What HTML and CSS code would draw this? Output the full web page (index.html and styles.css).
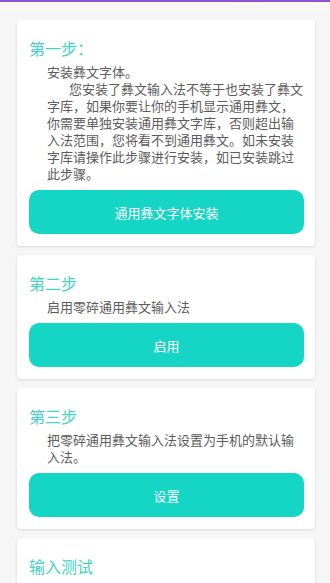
FILE: index.html
```html
<!DOCTYPE html>
<html lang="zh-CN">
<head>
    <meta charset="UTF-8">
    <meta name="viewport" content="width=device-width, initial-scale=1.0">
    <title>零碎通用彝文输入法</title>
    <link rel="stylesheet" href="styles.css">
</head>
<body>
    <div class="top-bar"></div>
    <div class="page">
        <div class="card">
            <div class="step-title">第一步：</div>
            <div class="step-text">
                <p>安装彝文字体。</p>
                <p class="indent">您安装了彝文输入法不等于也安装了彝文字库，如果你要让你的手机显示通用彝文，你需要单独安装通用彝文字库，否则超出输入法范围，您将看不到通用彝文。如未安装字库请操作此步骤进行安装，如已安装跳过此步骤。</p>
            </div>
            <button class="step-btn">通用彝文字体安装</button>
        </div>

        <div class="card">
            <div class="step-title">第二步</div>
            <div class="step-text">
                <p>启用零碎通用彝文输入法</p>
            </div>
            <button class="step-btn">启用</button>
        </div>

        <div class="card">
            <div class="step-title">第三步</div>
            <div class="step-text">
                <p>把零碎通用彝文输入法设置为手机的默认输入法。</p>
            </div>
            <button class="step-btn">设置</button>
        </div>

        <div class="card">
            <div class="step-title">输入测试</div>
            <div class="test-box"></div>
        </div>
    </div>
</body>
</html>
```

FILE: styles.css
```css
body {
    margin: 0;
    background: #f6f6f6;
    font-family: "Noto Sans CJK SC", "Noto Sans", sans-serif;
    overflow: hidden;
}
.top-bar {
    height: 2px;
    background: #8b52d2;
}
.page {
    padding: 18px 15px 20px 17px;
    background: linear-gradient(#fcf8f2, #f6f6f6 12px);
}
.card {
    background: #fff;
    border-radius: 4px;
    box-shadow: 0 1px 3px rgba(0, 0, 0, 0.12);
    padding: 17px 11px 12px 12px;
    margin-bottom: 9px;
}
.step-title {
    font-size: 16px;
    line-height: 22px;
    color: #3fd4c6;
}
.step-text {
    margin: 4px 0 8px 18px;
    font-size: 13px;
    line-height: 17px;
    color: #5c5c5c;
}
.step-text p {
    margin: 0;
}
.indent {
    text-indent: 22px;
}
.step-btn {
    display: block;
    width: 100%;
    height: 44px;
    border: none;
    border-radius: 10px;
    background: #15d5c4;
    color: #fff;
    font-family: inherit;
    font-size: 13px;
}
.test-box {
    height: 60px;
    margin-top: 8px;
    border-bottom: 1px solid #ddd;
}
```
